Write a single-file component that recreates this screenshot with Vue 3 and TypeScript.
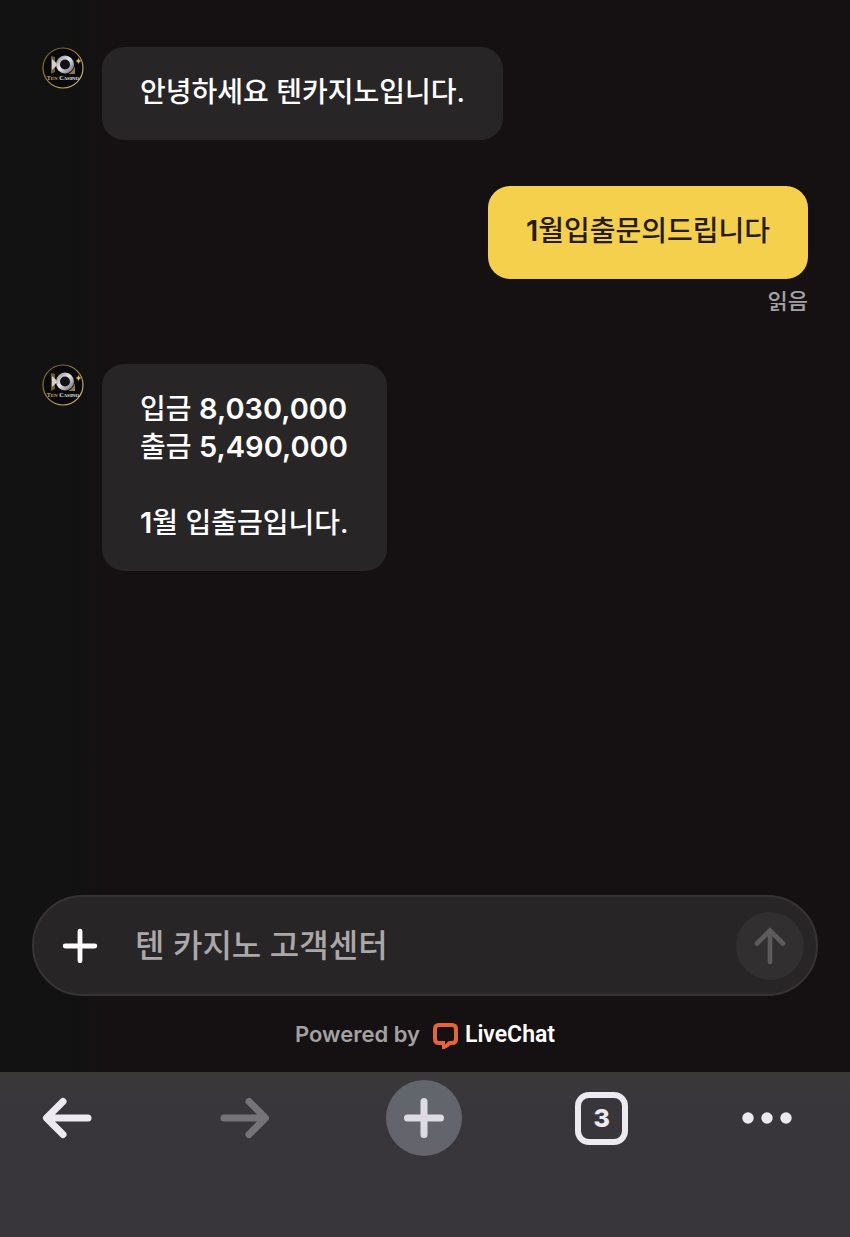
<script setup lang="ts">
import { ref } from 'vue'

interface Message {
  id: number
  from: 'agent' | 'visitor'
  lines: string[]
  status?: string
}

const messages: Message[] = [
  { id: 1, from: 'agent', lines: ['안녕하세요 텐카지노입니다.'] },
  { id: 2, from: 'visitor', lines: ['1월입출문의드립니다'], status: '읽음' },
  { id: 3, from: 'agent', lines: ['입금 8,030,000', '출금 5,490,000', '', '1월 입출금입니다.'] },
]

const draft = ref('')
const tabCount = 3

function splitNumbers(line: string): string[] {
  return line.split(/([\d,]+)/).filter((part) => part !== '')
}

function isNumber(part: string): boolean {
  return /^[\d,]+$/.test(part)
}
</script>

<template>
  <div class="screen">
    <main class="chat">
      <div v-for="m in messages" :key="m.id" class="row" :class="m.from">
        <svg v-if="m.from === 'agent'" class="avatar" viewBox="0 0 42 42" role="img" aria-label="TEN CASINO">
          <defs>
            <linearGradient :id="`ring${m.id}`" x1="0" y1="0" x2="1" y2="1">
              <stop offset="0" stop-color="#6d5a26" />
              <stop offset="0.5" stop-color="#a5873c" />
              <stop offset="1" stop-color="#d8bf76" />
            </linearGradient>
            <linearGradient :id="`silver${m.id}`" x1="0" y1="0" x2="1" y2="1">
              <stop offset="0" stop-color="#9a9aa0" />
              <stop offset="0.45" stop-color="#e6e6ea" />
              <stop offset="1" stop-color="#77777d" />
            </linearGradient>
          </defs>
          <circle cx="21" cy="21" r="20" fill="#09090d" :stroke="`url(#ring${m.id})`" stroke-width="1.2" />
          <path d="M9 9L13 10V25L9 27Z" fill="#6f5c2c" />
          <path d="M10 12L16 17.500L10 23Z" fill="#d5d0c6" />
          <circle cx="23" cy="17.500" r="7" fill="#111116" :stroke="`url(#silver${m.id})`" stroke-width="4" />
          <path d="M26.500 27Q31 24.500 33 19V27Z" fill="#8f7a43" />
          <path d="M36.500 11l1 2 2 1-2 1-1 2-1-2-2-1 2-1z" fill="#d6b457" />
          <text x="21" y="33" text-anchor="middle" class="avatar-text">
            <tspan fill="#d0ac50">T</tspan><tspan class="small-cap" fill="#d0ac50">EN</tspan><tspan fill="#eeeeee"> C</tspan><tspan class="small-cap" fill="#eeeeee">ASINO</tspan>
          </text>
        </svg>
        <div class="message">
          <div class="bubble">
            <p v-for="(line, i) in m.lines" :key="i" class="line"><span v-for="(part, j) in splitNumbers(line)" :key="j" :class="{ number: isNumber(part) }">{{ part }}</span></p>
          </div>
          <span v-if="m.status" class="status">{{ m.status }}</span>
        </div>
      </div>
    </main>

    <form class="composer" @submit.prevent>
      <button type="button" class="attach" aria-label="첨부">
        <svg width="36" height="36" viewBox="0 0 36 36" fill="none" stroke="#fff" stroke-width="4.8" stroke-linecap="round">
          <path d="M18 3.2V32.8M3.2 18H32.8" />
        </svg>
      </button>
      <input v-model="draft" class="field" type="text" placeholder="텐 카지노 고객센터" aria-label="텐 카지노 고객센터" />
      <button type="submit" class="send" aria-label="보내기">
        <svg width="36" height="40" viewBox="0 0 36 40" fill="none" stroke="#5d5b5c" stroke-width="4.600" stroke-linecap="round" stroke-linejoin="miter">
          <path d="M18 36V5M5 17.500L18 4.500L31 17.500" />
        </svg>
      </button>
    </form>

    <p class="powered">
      <span>Powered by</span>
      <a href="#" class="brand">
        <svg width="27" height="30" viewBox="0 0 27 30" fill="none" stroke="#e5653a" stroke-width="4" stroke-linecap="butt" stroke-linejoin="round">
          <path d="M11.500 24H7C4.500 24 3 22.500 3 20V10C3 7.500 4.500 6 7 6H20C22.500 6 24 7.500 24 10V20C24 22.500 22.500 24 20 24H17.500C16 26 14 27.500 11.500 28.200" />
          <path d="M11.500 22V30" stroke-width="3" />
        </svg>
        <span>LiveChat</span>
      </a>
    </p>

    <nav class="toolbar">
      <button type="button" class="tool" aria-label="뒤로">
        <svg width="50" height="42" viewBox="0 0 50 42" fill="none" stroke="#eceaf0" stroke-width="7" stroke-linecap="round" stroke-linejoin="round">
          <path d="M21 4.500L4.500 21L21 37.500M5.500 21H46" />
        </svg>
      </button>
      <button type="button" class="tool" aria-label="앞으로">
        <svg width="50" height="42" viewBox="0 0 50 42" fill="none" stroke="#757377" stroke-width="7" stroke-linecap="round" stroke-linejoin="round">
          <path d="M29 4.500L45.500 21L29 37.500M44.500 21H4" />
        </svg>
      </button>
      <button type="button" class="tool new-tab" aria-label="새 탭">
        <svg width="42" height="42" viewBox="0 0 42 42" fill="none" stroke="#dddce4" stroke-width="7" stroke-linecap="round">
          <path d="M21 4.500V37.500M4.500 21H37.500" />
        </svg>
      </button>
      <button type="button" class="tool" aria-label="탭">
        <span class="tabs">{{ tabCount }}</span>
      </button>
      <button type="button" class="tool more" aria-label="더보기">
        <svg width="50" height="12" viewBox="0 0 50 12" fill="#eceaf0">
          <circle cx="6" cy="6" r="5.700" />
          <circle cx="25" cy="6" r="5.700" />
          <circle cx="44" cy="6" r="5.700" />
        </svg>
      </button>
    </nav>
  </div>
</template>

<style>
body {
  margin: 0;
  background: #151112;
}
</style>

<style scoped>
.screen {
  display: flex;
  flex-direction: column;
  min-height: 100vh;
  box-sizing: border-box;
  background: linear-gradient(90deg, #111211 0, #111211 60px, #151112 110px);
  color: #fff;
  font-family: Inter, "Noto Sans CJK KR", sans-serif;
  font-weight: 500;
}

button {
  padding: 0;
  border: 0;
  background: none;
  color: inherit;
  font: inherit;
  display: flex;
  align-items: center;
  justify-content: center;
}

svg {
  display: block;
}

.chat {
  flex: 1;
  display: flex;
  flex-direction: column;
  gap: 46px;
  padding: 47px 42px 40px;
}

.row {
  display: flex;
  align-items: flex-start;
  gap: 18px;
}

.visitor {
  justify-content: flex-end;
}

.avatar {
  flex: none;
  width: 42px;
  height: 42px;
}

.avatar-text {
  font-family: "Liberation Serif", serif;
  font-size: 6px;
  font-weight: 700;
}

.small-cap {
  font-size: 5px;
}

.message {
  display: flex;
  flex-direction: column;
  align-items: flex-end;
}

.bubble {
  padding: 26px 38px 29px;
  border-radius: 22px;
  background: #282526;
  font-size: 28px;
  line-height: 38px;
}

.visitor .bubble {
  background: #f5d04c;
  color: #241b0b;
}

.line {
  margin: 0;
  min-height: 38px;
}

.number {
  font-size: 29px;
  font-weight: 600;
}

.status {
  margin: 6px 0 1px;
  color: #a3a1a2;
  font-size: 22px;
  line-height: 32px;
}

.composer {
  display: flex;
  align-items: center;
  box-sizing: border-box;
  height: 101px;
  margin: 0 32px;
  padding: 0 12px 0 28px;
  border: 2px solid #363334;
  border-radius: 51px;
  background: #282526;
}

.field {
  flex: 1;
  min-width: 0;
  margin-left: 37px;
  padding: 0;
  border: 0;
  outline: 0;
  background: none;
  color: #fff;
  font: inherit;
  font-size: 32px;
  line-height: 48px;
}

.field::placeholder {
  color: #aba8a9;
  opacity: 1;
}

.send {
  width: 68px;
  height: 68px;
  border-radius: 50%;
  background: #322f30;
}

.powered {
  display: flex;
  align-items: center;
  justify-content: center;
  gap: 12px;
  margin: 0;
  height: 76px;
  color: #a3a1a2;
  font-size: 22px;
  font-weight: 600;
}

.brand {
  display: flex;
  align-items: center;
  gap: 6px;
  color: #fff;
  font-family: Roboto, Inter, sans-serif;
  font-size: 23px;
  text-decoration: none;
}

.toolbar {
  display: flex;
  justify-content: space-between;
  align-items: flex-start;
  box-sizing: border-box;
  height: 165px;
  padding: 8px 58px 0 29px;
  background: linear-gradient(180deg, #3a3838 0, #38363b 36px, #38363b 100%);
}

.tool {
  width: 76px;
  height: 76px;
}

.new-tab {
  border-radius: 50%;
  background: linear-gradient(160deg, #60666c, #65636c);
}

.tabs {
  display: flex;
  align-items: center;
  justify-content: center;
  box-sizing: border-box;
  width: 53px;
  height: 53px;
  border: 6px solid #eceaf0;
  border-radius: 14px;
  color: #eceaf0;
  font-size: 25px;
  font-weight: 800;
}

.more {
  width: 50px;
}
</style>
